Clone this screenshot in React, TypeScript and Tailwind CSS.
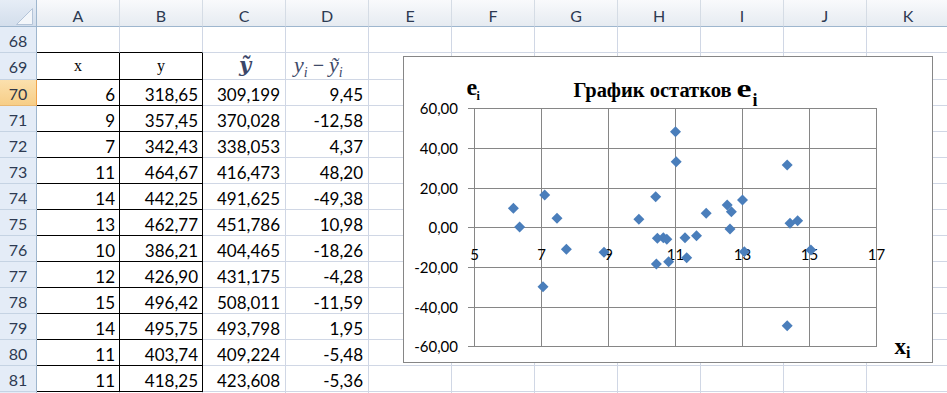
import React from 'react';

const COLS = ['A', 'B', 'C', 'D', 'E', 'F', 'G', 'H', 'I', 'J', 'K'];

const DATA: string[][] = [
  ['70', '6', '318,65', '309,199', '9,45'],
  ['71', '9', '357,45', '370,028', '-12,58'],
  ['72', '7', '342,43', '338,053', '4,37'],
  ['73', '11', '464,67', '416,473', '48,20'],
  ['74', '14', '442,25', '491,625', '-49,38'],
  ['75', '13', '462,77', '451,786', '10,98'],
  ['76', '10', '386,21', '404,465', '-18,26'],
  ['77', '12', '426,90', '431,175', '-4,28'],
  ['78', '15', '496,42', '508,011', '-11,59'],
  ['79', '14', '495,75', '493,798', '1,95'],
  ['80', '11', '403,74', '409,224', '-5,48'],
  ['81', '11', '418,25', '423,608', '-5,36'],
];

const PTS: [number, number][] = [
  [513.4, 208.3], [519.6, 227], [544.7, 195], [557, 218.3], [566.4, 249.3],
  [604, 252.3], [638.9, 219.3], [655.7, 196.7], [657.4, 238.3], [663.3, 237.7],
  [666.8, 239.3], [675.5, 131.7], [676.2, 161.7], [685, 237.7], [696.5, 235.7],
  [706.2, 213.3], [727.2, 205], [731.4, 211.7], [730, 229], [742.5, 200],
  [787.2, 165], [790, 223.3], [797.6, 220.7], [744.3, 251.7], [810.9, 250],
  [686.7, 257.7], [668.6, 261.7], [656.4, 264], [543, 286.7], [787.2, 325.7],
];

const H_LINES = [108, 148, 188, 227, 267, 307, 346];
const Y_LABELS = ['60,00', '40,00', '20,00', '0,00', '-20,00', '-40,00', '-60,00'];
const V_LINES = [474, 541, 608, 675, 742, 809, 876];
const X_LABELS = ['5', '7', '9', '11', '13', '15', '17'];

function RowHead({ n, active }: { n: string; active?: boolean }) {
  return (
    <div
      className={
        active
          ? "w-[37px] shrink-0 h-full border-r border-b border-r-[#f0a24a] border-b-[#e9b872] bg-linear-to-b from-[#fbe0ad] to-[#f7ce88] text-center pt-[4px] leading-[20px] text-[16px] text-[#2d3648] font-['Lato',sans-serif]"
          : "w-[37px] shrink-0 h-full border-r border-b border-r-[#9eb6ce] border-b-[#c5d3e3] bg-[#e4ecf7] text-center pt-[4px] leading-[20px] text-[16px] text-[#2d3a52] font-['Lato',sans-serif]"
      }
    >
      {n}
    </div>
  );
}

function Cell({ children, boxed, right }: { children?: React.ReactNode; boxed?: boolean; right?: boolean }) {
  if (boxed) {
    return (
      <div className="w-[83px] shrink-0 h-full border-r border-b border-black text-right pr-[4px] pt-[4px] leading-[21px] text-[17px] text-black font-['Lato',sans-serif] whitespace-nowrap">
        {children}
      </div>
    );
  }
  return (
    <div
      className={
        right
          ? "w-[83px] shrink-0 h-full border-r border-b border-[#d0d7e5] text-right pr-[5px] pt-[4px] leading-[21px] text-[17px] text-black font-['Lato',sans-serif] whitespace-nowrap"
          : "w-[83px] shrink-0 h-full border-r border-b border-[#d0d7e5]"
      }
    >
      {children}
    </div>
  );
}

function Blanks({ count }: { count: number }) {
  return (
    <>
      {Array.from({ length: count }).map((_, i) => (
        <Cell key={i} />
      ))}
    </>
  );
}

function Chart() {
  return (
    <div className="absolute left-[403px] top-[56px] w-[530px] h-[307px] border border-[#868686] bg-white">
      <svg width="528" height="305" viewBox="404 57 528 305" className="block">
        {H_LINES.map((y) => (
          <line key={'h' + y} x1={468} x2={877} y1={y + 0.5} y2={y + 0.5} stroke="#868686" strokeWidth={1} />
        ))}
        {V_LINES.map((x) => (
          <line key={'v' + x} x1={x + 0.5} x2={x + 0.5} y1={108} y2={347} stroke="#868686" strokeWidth={1} />
        ))}
        {H_LINES.map((y, i) => (
          <text key={'yl' + y} x={458} y={y + 5.5} textAnchor="end" fontFamily="Lato, sans-serif" fontSize={15} fill="#000">
            {Y_LABELS[i]}
          </text>
        ))}
        {V_LINES.map((x, i) => (
          <text key={'xl' + x} x={x + 0.5} y={260} textAnchor="middle" fontFamily="Lato, sans-serif" fontSize={15} fill="#000">
            {X_LABELS[i]}
          </text>
        ))}
        {PTS.map(([x, y], i) => (
          <polygon
            key={'p' + i}
            points={`${x},${y - 5.5} ${x + 5.5},${y} ${x},${y + 5.5} ${x - 5.5},${y}`}
            fill="#4a7ebb"
          />
        ))}
        <text x={573.5} y={97} fontFamily="'Liberation Serif', serif" fontWeight="bold" fontSize={20} textLength={158} lengthAdjust="spacingAndGlyphs" fill="#000">
          График остатков
        </text>
        <text x={736.5} y={97} fontFamily="'Liberation Serif', serif" fontWeight="bold" fontSize={26} textLength={15} lengthAdjust="spacingAndGlyphs" fill="#000">
          e
        </text>
        <text x={752.5} y={106} fontFamily="'Liberation Serif', serif" fontWeight="bold" fontSize={18} fill="#000">
          i
        </text>
        <text x={466.5} y={95} fontFamily="'Liberation Serif', serif" fontWeight="bold" fontSize={24} fill="#000">
          e
        </text>
        <text x={476.5} y={99.5} fontFamily="'Liberation Serif', serif" fontWeight="bold" fontSize={12} fill="#000">
          i
        </text>
        <text x={894.5} y={353.5} fontFamily="'Liberation Serif', serif" fontWeight="bold" fontSize={23} fill="#000">
          x
        </text>
        <text x={906} y={357.7} fontFamily="'Liberation Serif', serif" fontWeight="bold" fontSize={16} fill="#000">
          i
        </text>
      </svg>
    </div>
  );
}

export default function App() {
  return (
    <div className="relative w-[947px] h-[393px] overflow-hidden bg-white">
      {/* column headers */}
      <div className="flex h-[27px]">
        <div className="relative w-[37px] shrink-0 h-full border-r border-b border-r-[#9eb6ce] border-b-[#9eb6ce] bg-linear-to-b from-[#e6edf6] to-[#d3deec]">
          <svg width="36" height="26" className="absolute left-0 top-0">
            <polygon points="16.5,24.5 32.5,8.5 32.5,24.5" fill="#f3f6fa" stroke="#b4c4d8" strokeWidth={1} />
          </svg>
        </div>
        {COLS.map((c) => (
          <div
            key={c}
            className="w-[83px] shrink-0 h-full border-r border-b border-r-[#d5dce5] border-b-[#9eb6ce] bg-linear-to-b from-[#f9fafc] to-[#e6ebf1] text-center pt-[5px] leading-[21px] text-[16px] text-[#2d3a52] font-['Lato',sans-serif]"
          >
            {c}
          </div>
        ))}
      </div>

      {/* row 68 */}
      <div className="flex h-[26px]">
        <RowHead n="68" />
        <div className="w-[83px] shrink-0 h-full border-r border-b border-r-[#d0d7e5] border-b-black" />
        <div className="w-[83px] shrink-0 h-full border-r border-b border-r-[#d0d7e5] border-b-black" />
        <Blanks count={9} />
      </div>

      {/* row 69 */}
      <div className="flex h-[27px]">
        <RowHead n="69" />
        <div className="w-[83px] shrink-0 h-full border-r border-b border-black text-center pt-[4px] leading-[18px] text-[16px] text-black font-['Liberation_Serif',serif]">
          x
        </div>
        <div className="w-[83px] shrink-0 h-full border-r border-b border-black text-center pt-[4px] leading-[18px] text-[16px] text-black font-['Liberation_Serif',serif]">
          y
        </div>
        <div className="w-[83px] shrink-0 h-full border-r border-b border-[#d0d7e5] text-center pl-[2px] pt-[1px] leading-[21px] text-[21px] font-bold italic text-[#3b4668] font-['DejaVu_Serif','Liberation_Serif',serif]">
          ỹ
        </div>
        <div className="w-[83px] shrink-0 h-full border-r border-b border-[#d0d7e5] pl-[8px] pt-[1px] leading-[21px] text-[22px] italic text-[#3f4a69] font-['Liberation_Serif','DejaVu_Serif',serif] whitespace-nowrap">
          y<span className="text-[14px] align-sub">i</span>
          <span className="not-italic font-bold text-[20px]"> − </span>
          ỹ<span className="text-[14px] align-sub">i</span>
        </div>
        <Blanks count={7} />
      </div>

      {/* data rows */}
      {DATA.map((r, i) => (
        <div key={r[0]} className="flex h-[26px]">
          <RowHead n={r[0]} active={i === 0} />
          <Cell boxed>{r[1]}</Cell>
          <Cell boxed>{r[2]}</Cell>
          <Cell right>{r[3]}</Cell>
          <Cell right>{r[4]}</Cell>
          <Blanks count={7} />
        </div>
      ))}

      {/* row 82 (partial, only its top edge is visible) */}
      <div className="flex h-[26px]">
        <RowHead n="" />
        <Blanks count={11} />
      </div>

      <Chart />
    </div>
  );
}
